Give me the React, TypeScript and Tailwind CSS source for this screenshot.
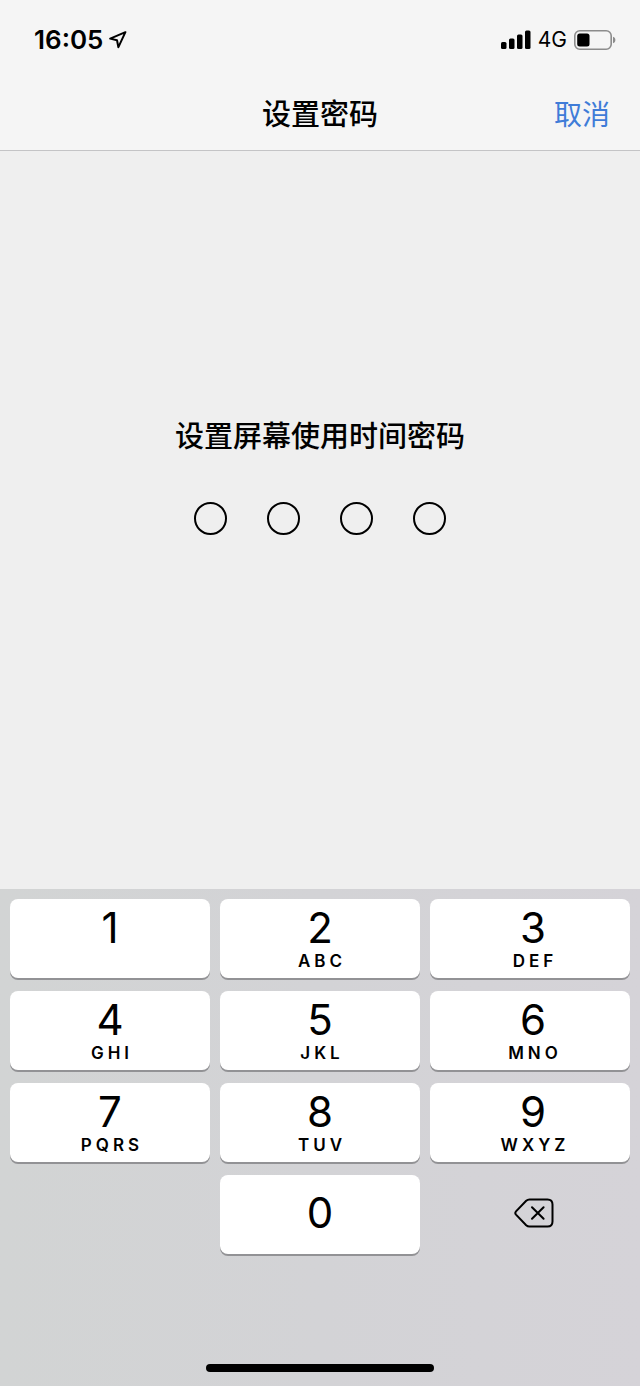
import { useState } from 'react'

const CODE_LENGTH = 4

const keys = [
  { digit: '1', letters: '' },
  { digit: '2', letters: 'ABC' },
  { digit: '3', letters: 'DEF' },
  { digit: '4', letters: 'GHI' },
  { digit: '5', letters: 'JKL' },
  { digit: '6', letters: 'MNO' },
  { digit: '7', letters: 'PQRS' },
  { digit: '8', letters: 'TUV' },
  { digit: '9', letters: 'WXYZ' },
]

const keyClass =
  'flex h-[79px] flex-col items-center rounded-lg bg-white text-black shadow-[0_2px_0_#929295] active:bg-gray-200'

function LocationArrow() {
  return (
    <svg width="18" height="18" viewBox="0 0 18 18" fill="none" aria-hidden="true">
      <path
        d="M16.4 1.2 1.2 7.6 8 9.2 9.4 16.2Z"
        stroke="#000"
        strokeWidth="2"
        strokeLinejoin="round"
      />
    </svg>
  )
}

function Signal() {
  return (
    <svg width="30" height="19" viewBox="0 0 30 19" aria-hidden="true">
      <rect x="0" y="12" width="5.5" height="7" rx="1.5" />
      <rect x="8" y="8.5" width="5.5" height="10.5" rx="1.5" />
      <rect x="16" y="4.5" width="5.5" height="14.5" rx="1.5" />
      <rect x="24" y="0.5" width="5.5" height="18.5" rx="1.5" />
    </svg>
  )
}

function Battery() {
  return (
    <svg width="42" height="20" viewBox="0 0 42 20" aria-hidden="true">
      <rect x="0.8" y="0.8" width="36.4" height="18.4" rx="5" fill="none" stroke="#8c8c8c" strokeWidth="1.6" />
      <rect x="3.2" y="3.5" width="12.3" height="13" rx="2.5" />
      <path d="M39 6.8C40.6 7.4 41.4 8.6 41.4 10S40.6 12.6 39 13.2Z" fill="#8c8c8c" />
    </svg>
  )
}

function Backspace() {
  return (
    <svg width="40" height="30" viewBox="0 0 40 30" fill="none" stroke="#000" strokeWidth="2" aria-hidden="true">
      <path
        d="M15.5 1.5H33.5Q38.5 1.5 38.5 6.5V23.5Q38.5 28.5 33.5 28.5H15.5Q13.6 28.5 12.2 27.2L2 16.6Q0.6 15 2 13.4L12.2 2.8Q13.6 1.5 15.5 1.5Z"
        strokeLinejoin="round"
      />
      <path d="M18 9.2 29.6 20.8M29.6 9.2 18 20.8" strokeLinecap="round" />
    </svg>
  )
}

export default function App() {
  const [code, setCode] = useState('')

  const press = (digit: string) => setCode((c) => (c.length < CODE_LENGTH ? c + digit : c))

  return (
    <div
      lang="zh-CN"
      className="flex min-h-screen flex-col bg-[#efefef] font-['Inter','Noto_Sans_CJK_SC',sans-serif] text-black"
    >
      <header className="border-b border-[#c4c4c6] bg-[#f5f5f5]">
        {/* Status bar */}
        <div className="flex h-[79px] items-center justify-between pr-6 pl-[34px]">
          <div className="flex items-center gap-1.5">
            <span className="text-[26px] leading-8 font-semibold">16:05</span>
            <LocationArrow />
          </div>
          <div className="flex items-center gap-[7px]">
            <Signal />
            <span className="text-[21px] leading-8">4G</span>
            <Battery />
          </div>
        </div>

        {/* Navigation */}
        <div className="grid h-[71px] grid-cols-3 items-center px-[30px]">
          <h1 className="col-start-2 text-center text-[29px] leading-10 font-medium whitespace-nowrap">设置密码</h1>
          <button type="button" className="justify-self-end text-[28px] leading-10 text-[#3f7cd8]">
            取消
          </button>
        </div>
      </header>

      <main className="flex flex-1 flex-col items-center pt-[266px]">
        <h2 className="text-[29px] leading-10 font-medium">设置屏幕使用时间密码</h2>
        <div role="status" aria-label={`${code.length} / ${CODE_LENGTH}`} className="mt-[45px] flex gap-10">
          {Array.from({ length: CODE_LENGTH }, (_, i) => (
            <span
              key={i}
              className={`size-[33px] rounded-full border-2 border-black ${i < code.length ? 'bg-black' : ''}`}
            />
          ))}
        </div>
      </main>

      {/* Keypad */}
      <footer className="bg-linear-to-r from-[#d2d4d4] via-[#d3d3d6] to-[#d5d3d8] px-[10px] pt-[10px] pb-[14px]">
        <div className="grid grid-cols-3 gap-x-[10px] gap-y-[13px]">
          {keys.map(({ digit, letters }) => (
            <button key={digit} type="button" onClick={() => press(digit)} className={`${keyClass} pt-2 nth-[3n]:pl-1.5`}>
              <span className="text-[42px] leading-[42px]">{digit}</span>
              {letters && <span className="mt-0.5 pl-1 text-[17px] leading-5 font-semibold tracking-[4px]">{letters}</span>}
            </button>
          ))}
          <button type="button" onClick={() => press('0')} className={`${keyClass} col-start-2 justify-center pb-1`}>
            <span className="text-[42px] leading-[42px]">0</span>
          </button>
          <button
            type="button"
            aria-label="删除"
            onClick={() => setCode((c) => c.slice(0, -1))}
            className="flex h-[79px] items-center justify-center pb-1 pl-2"
          >
            <Backspace />
          </button>
        </div>
        <div className="mx-auto mt-[110px] h-2 w-[228px] rounded-full bg-black" />
      </footer>
    </div>
  )
}
